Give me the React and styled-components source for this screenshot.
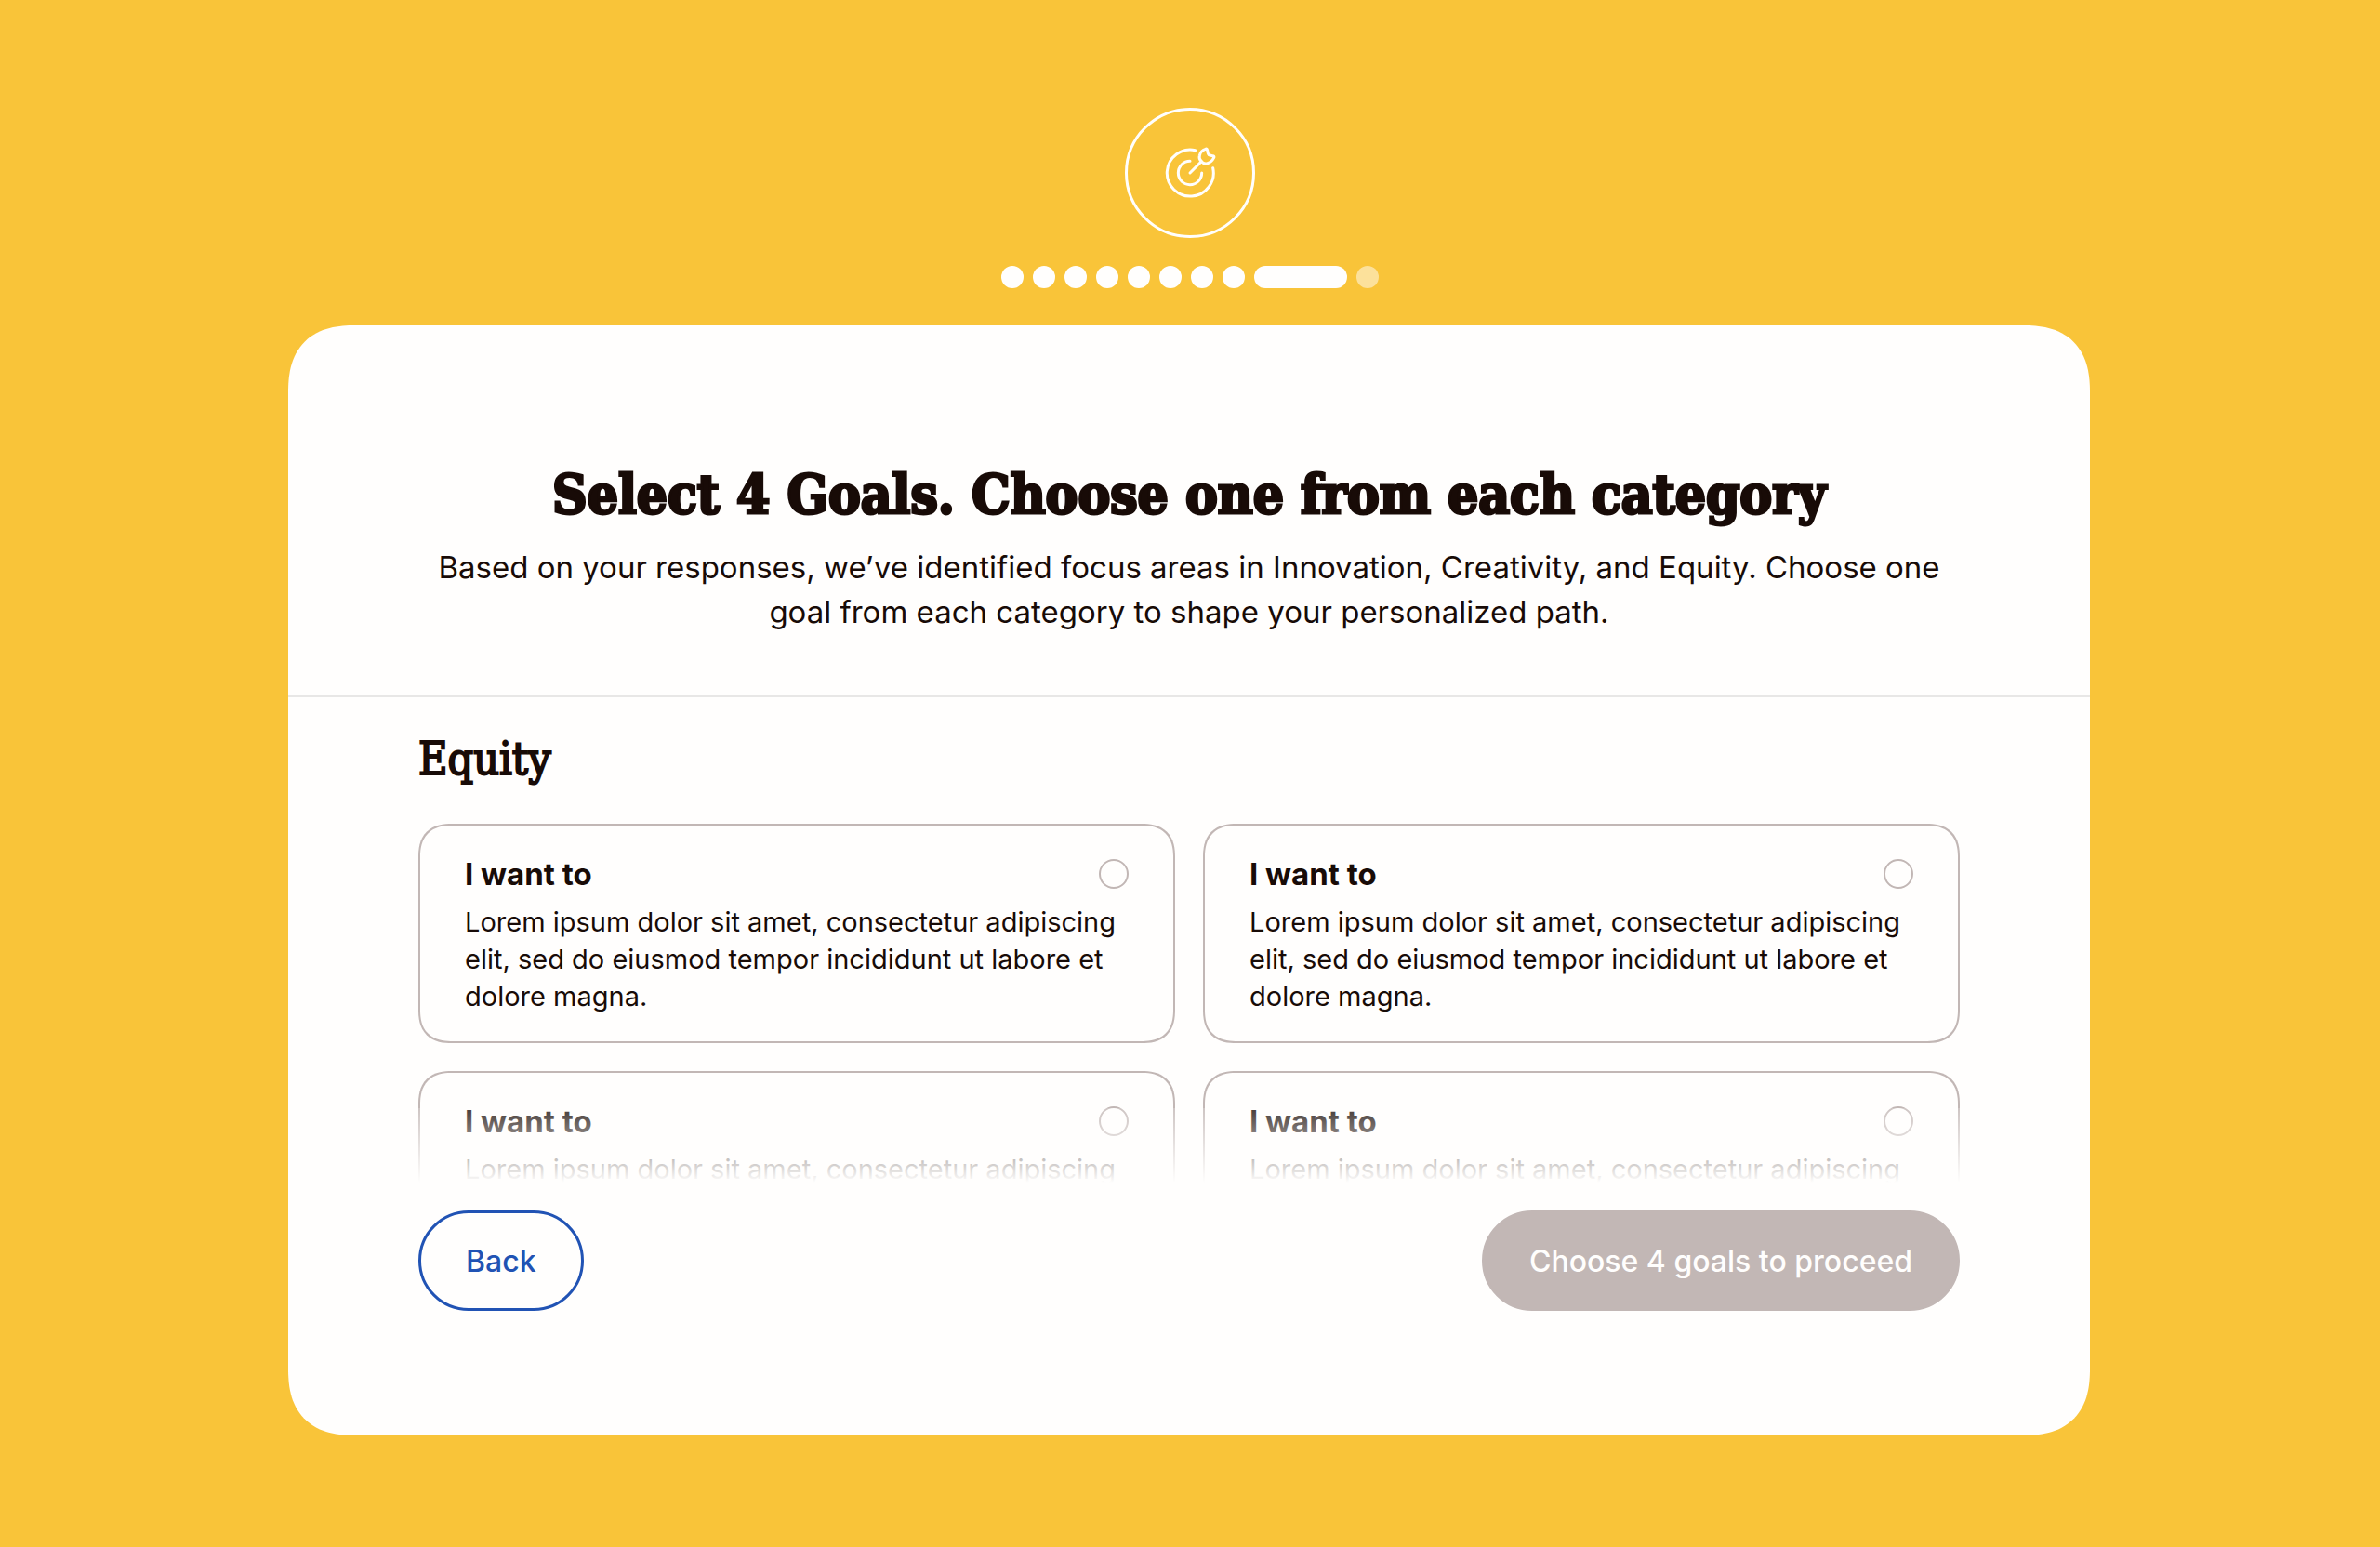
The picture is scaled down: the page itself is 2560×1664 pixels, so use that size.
import React, { useState } from "react";
import styled, { createGlobalStyle } from "styled-components";

const color = {
  yellow: "#f9c439",
  paper: "#fffefd",
  ink: "#180b07",
  taupe: "#c2b7b5",
  blue: "#2153b4",
  rule: "#e8e7e6",
};

const sans = `Inter, "Liberation Sans", sans-serif`;
const serif = `"DejaVu Serif Condensed", "DejaVu Serif", serif`;

const GlobalStyle = createGlobalStyle`
  *, *::before, *::after { box-sizing: border-box; }
  body { margin: 0; background: ${color.yellow}; color: ${color.ink}; font-family: ${sans}; }
  h1, h2, p { margin: 0; }
`;

const Page = styled.main`
  display: flex;
  flex-direction: column;
  height: 100vh;
  min-height: 1200px;
  padding: 116px 0 120px;
`;

const Progress = styled.header`
  display: flex;
  flex-direction: column;
  align-items: center;
  gap: 30px;
  margin-bottom: 40px;
`;

const Badge = styled.div`
  display: grid;
  place-items: center;
  width: 140px;
  height: 140px;
  border: 3px solid ${color.paper};
  border-radius: 50%;
`;

const Steps = styled.ol`
  display: flex;
  gap: 10px;
  margin: 0;
  padding: 0;
  list-style: none;
`;

const Step = styled.li`
  width: ${(p) => (p.$state === "current" ? 100 : 24)}px;
  height: 24px;
  border-radius: 12px;
  background: ${color.paper};
  opacity: ${(p) => (p.$state === "next" ? 0.5 : 1)};
`;

const Panel = styled.form`
  display: flex;
  flex: 1;
  flex-direction: column;
  min-height: 0;
  margin: 0 312px 0 310px;
  padding-bottom: 134px;
  background: ${color.paper};
  border-radius: 64px;
  @supports (corner-shape: superellipse(1.3)) {
    border-radius: 72px;
    corner-shape: superellipse(1.3);
  }
`;

const Intro = styled.div`
  padding: 146px 140px 66px;
  border-bottom: 2px solid ${color.rule};
  text-align: center;
`;

const Title = styled.h1`
  font-family: ${serif};
  font-size: 58px;
  font-weight: 700;
  line-height: 72px;
  -webkit-text-stroke: 3px ${color.ink};
`;

const Lead = styled.p`
  margin-top: 18px;
  font-size: 33px;
  line-height: 48px;
`;

const Scroller = styled.div`
  position: relative;
  display: flex;
  flex: 1;
  min-height: 0;
  &::after {
    content: "";
    position: absolute;
    inset: auto 0 0;
    height: 80px;
    background: linear-gradient(rgb(255 254 253 / 0.2), ${color.paper});
    pointer-events: none;
  }
`;

const GoalList = styled.section`
  flex: 1;
  padding: 38px 140px 80px;
  overflow-y: auto;
  scrollbar-width: none;
`;

const Category = styled.h2`
  margin-bottom: 42px;
  font-family: ${serif};
  font-size: 48px;
  font-weight: 400;
  line-height: 56px;
  -webkit-text-stroke: 2px ${color.ink};
`;

const GoalGrid = styled.div`
  display: grid;
  grid-template-columns: 1fr 1fr;
  gap: 30px;
`;

const GoalCard = styled.label`
  display: flex;
  flex-direction: column;
  gap: 16px;
  padding: 36px 48px 28px;
  border: 2px solid ${(p) => (p.$selected ? color.blue : color.taupe)};
  border-radius: 32px;
  cursor: pointer;
  @supports (corner-shape: superellipse(1.3)) {
    border-radius: 36px;
    corner-shape: superellipse(1.3);
  }
`;

const GoalHead = styled.span`
  display: flex;
  align-items: center;
  justify-content: space-between;
`;

const GoalTitle = styled.span`
  font-size: 33px;
  font-weight: 700;
  line-height: 32px;
`;

const Radio = styled.input`
  appearance: none;
  width: 32px;
  height: 32px;
  margin: 0;
  border: 2px solid ${color.taupe};
  border-radius: 50%;
  &:checked { border: 10px solid ${color.blue}; }
`;

const GoalText = styled.span`
  font-size: 29px;
  line-height: 40px;
`;

const Actions = styled.footer`
  display: flex;
  justify-content: space-between;
  padding: 30px 140px 0;
`;

const Button = styled.button`
  height: 108px;
  padding: 0 48px;
  border: 3px solid ${(p) => (p.$outlined ? color.blue : color.taupe)};
  border-radius: 54px;
  background: ${(p) => (p.$outlined ? "transparent" : color.taupe)};
  color: ${(p) => (p.$outlined ? color.blue : color.paper)};
  font-family: inherit;
  font-size: 32px;
  font-weight: 500;
`;

function TargetIcon() {
  return (
    <svg width="56" height="56" viewBox="0 0 168 168" fill="none" stroke={color.paper}
      strokeWidth="9" strokeLinecap="round" strokeLinejoin="round" aria-hidden="true">
      <path d="M101 11A75 75 0 1 0 158 68" />
      <path d="M84 46A38 38 0 1 0 122 84" />
      <path d="M84 84L121 47" />
      <path d="M121 47C115 42 113 35 115 28C117 18 125 10 134 7C138 5 139 8 140 11C141 20 142 24 145 26C149 28 153 28 158 29C161 30 163 32 161 35C157 43 149 51 140 53C132 55 126 53 121 47Z" />
    </svg>
  );
}

const steps = [...Array(8).fill("done"), "current", "next"];
const goals = Array.from({ length: 4 }, (_, i) => ({
  id: `equity-${i + 1}`,
  title: "I want to",
  text: "Lorem ipsum dolor sit amet, consectetur adipiscing elit, sed do eiusmod tempor incididunt ut labore et dolore magna.",
}));

export default function App() {
  const [selected, setSelected] = useState(null);

  return (
    <>
      <GlobalStyle />
      <Page>
        <Progress>
          <Badge><TargetIcon /></Badge>
          <Steps aria-label="Progress">
            {steps.map((state, i) => (
              <Step key={i} $state={state} aria-current={state === "current" ? "step" : undefined} />
            ))}
          </Steps>
        </Progress>
        <Panel onSubmit={(e) => e.preventDefault()}>
          <Intro>
            <Title>Select 4 Goals. Choose one from each category</Title>
            <Lead>
              Based on your responses, we’ve identified focus areas in Innovation, Creativity, and
              Equity. Choose one goal from each category to shape your personalized path.
            </Lead>
          </Intro>
          <Scroller>
            <GoalList>
              <Category>Equity</Category>
              <GoalGrid>
                {goals.map((goal) => (
                  <GoalCard key={goal.id} htmlFor={goal.id} $selected={selected === goal.id}>
                    <GoalHead>
                      <GoalTitle>{goal.title}</GoalTitle>
                      <Radio type="radio" name="equity" id={goal.id}
                        checked={selected === goal.id} onChange={() => setSelected(goal.id)} />
                    </GoalHead>
                    <GoalText>{goal.text}</GoalText>
                  </GoalCard>
                ))}
              </GoalGrid>
            </GoalList>
          </Scroller>
          <Actions>
            <Button type="button" $outlined>Back</Button>
            <Button type="submit" disabled>Choose 4 goals to proceed</Button>
          </Actions>
        </Panel>
      </Page>
    </>
  );
}
